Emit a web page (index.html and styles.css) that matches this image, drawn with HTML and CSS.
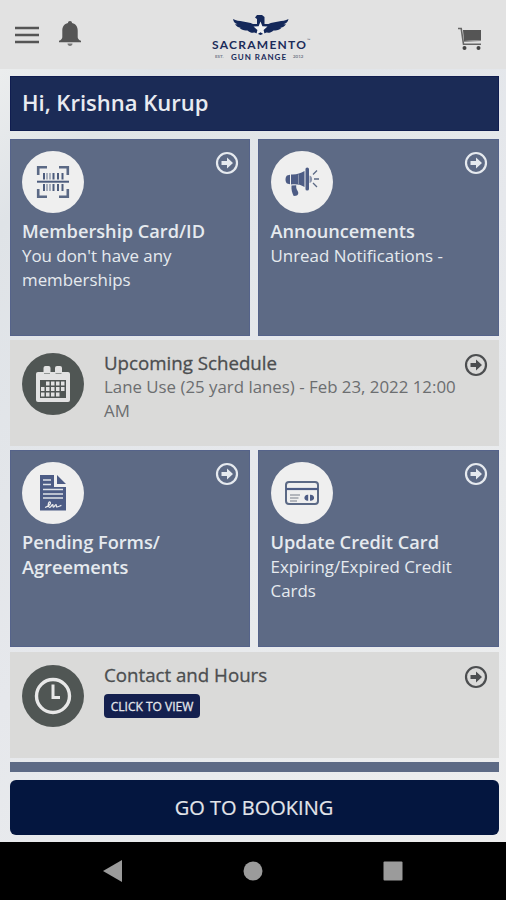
FILE: index.html
```
<!DOCTYPE html>
<html lang="en">
<head>
<meta charset="utf-8">
<title>Sacramento Gun Range</title>
<link rel="stylesheet" href="styles.css">
</head>
<body>
<svg class="defs" width="0" height="0">
	<symbol id="arrow" viewBox="0 0 24 24">
		<circle cx="12" cy="12" r="10" fill="none" stroke="currentColor" stroke-width="2.2"/>
		<path d="M6.5 10h5.5V6.5l6 5.5-6 5.5V14H6.5z" fill="currentColor"/>
	</symbol>
</svg>
<div class="app">
	<header class="topbar">
		<div class="topbar_left">
			<svg class="menu_icon" viewBox="0 0 24 18"><path d="M0 2h24M0 9h24M0 16h24" stroke="#555" stroke-width="2.4"/></svg>
			<svg class="bell_icon" viewBox="0 0 24 27"><path fill="#555" d="M12 1c1.300 0 2 .8 2 2.100 4 .9 5.700 3.900 5.700 7.400v6.700c0 1.600 1.200 2.700 3.300 3.600v1.400H1v-1.400c2.100-.9 3.300-2 3.300-3.600v-6.700C4.300 7 6 4 10 3.100 10 1.800 10.700 1 12 1z"/><path fill="#777" d="M9.500 23.500h5c0 1.500-1 2.500-2.500 2.500s-2.500-1-2.500-2.500z"/></svg>
		</div>
		<svg class="logo" viewBox="0 0 104 50">
			<path fill="#14285a" d="M23 4c6 3 14 2 20 5h4V4l-2-1.500L47 0h5l2.500 2v7h4c6-3 14-2 20-5-.5 3-2.500 4.500-5 5.200h2.500c-1.500 2.500-4 3.500-6.500 3.600h2c-2 2.400-5 3-8 2.600-2 2-4.500 2.600-7 2.200L50.500 20l-6-2.400c-2.500.4-5-.2-7-2.200-3 .4-6-.2-8-2.600h2c-2.500-.1-5-1.100-6.500-3.600h2.500C25 8.500 23.500 7 23 4z"/>
			<path fill="#f0f1f2" d="M50.500 6.500l1.900 4.700 5.100.4-3.900 3.300 1.200 5-4.300-2.700-4.300 2.700 1.200-5-3.900-3.300 5.100-.4z"/>
			<text class="logo_name" x="2" y="33.500" textLength="94">SACRAMENTO</text>
			<text class="logo_sub" x="21" y="44.500" textLength="55">GUN RANGE</text>
			<text class="logo_tiny" x="5" y="43">EST.</text>
			<text class="logo_tiny" x="83" y="43">2012</text>
			<text class="logo_tiny" x="97" y="27">™</text>
		</svg>
		<svg class="cart_icon" viewBox="0 0 24 24"><path fill="#555" d="M5 3h18v10L6 14z"/><path d="M0 1.500h3.200L5.500 17.200H23" fill="none" stroke="#666" stroke-width="1.600"/><path d="M6 14.500l17-1" stroke="#888" stroke-width="1.200"/><circle cx="6.500" cy="21" r="2" fill="#444"/><circle cx="20.500" cy="21" r="2" fill="#444"/></svg>
	</header>

	<main class="content">
		<div class="greeting">Hi, Krishna Kurup</div>

		<div class="tiles">
			<section class="tile">
				<div class="tile_head">
					<div class="round">
						<svg width="34" height="34" viewBox="0 0 34 34">
							<path d="M2.200 10V2.200H11M23 2.200h8.800V10M2.200 24v7.800H11M23 31.800h8.800V24" fill="none" stroke="#5b6985" stroke-width="2.600"/>
							<path d="M8 8v6.500M17.500 8v6.500M22 8v6.500M26.500 8v6.500M8 19v7M17.500 19v7M22 19v7M26.500 19v7" stroke="#4d5c7d" stroke-width="2"/>
							<path d="M11 8v6.500M14 8v6.500M11 19v7M14 19v7" stroke="#a0a8b8" stroke-width="1.800"/>
							<path d="M1 16.700h32" stroke="#4d5c7d" stroke-width="2"/>
						</svg>
					</div>
					<svg class="arrow"><use href="#arrow"/></svg>
				</div>
				<h2 class="tile_title">Membership Card/ID</h2>
				<p class="tile_text">You don't have any memberships</p>
			</section>
			<section class="tile">
				<div class="tile_head">
					<div class="round">
						<svg width="36" height="32" viewBox="0 0 36 32">
							<g fill="#4d5c85">
								<path d="M3 9.500l3-.8v9.600l-3-.8c-2-1.500-2-6.500 0-8z"/>
								<path d="M7 8.500c6 .3 9-1 13.500-3.500v16C16 18.500 13 18 7 18.500z"/>
								<path d="M7.500 19.500l4.700-.3c-.3 3 .8 4.500 1.800 6.500.8 1.800 0 3.500-2 4l-2.300.3c-1.500-3-2.600-6-2.200-10.500z"/>
								<path d="M21.500 3q0-1.500 1.700-1.500T25 3v20q0 1.500-1.800 1.500T21.500 23z"/>
							</g>
							<path d="M25.500 9.500c3.500.5 3.500 7 0 7.500z" fill="#8a94ab"/>
							<path d="M29 8.500l4-4M30 13h5M29 17l4 4" stroke="#5b6985" stroke-width="1.300"/>
							<path d="M14.500 8.500v9.500" stroke="#8a94ab" stroke-width="1"/>
						</svg>
					</div>
					<svg class="arrow"><use href="#arrow"/></svg>
				</div>
				<h2 class="tile_title">Announcements</h2>
				<p class="tile_text">Unread Notifications -</p>
			</section>
		</div>

		<section class="wide">
			<div class="round dark">
				<svg width="36" height="36" viewBox="0 0 36 36">
					<path fill="#e2e2e2" d="M3 6h30q2 0 2 2v26q0 2-2 2H3q-2 0-2-2V8q0-2 2-2z"/>
					<rect x="8.500" y="0" width="7" height="9" rx="2" fill="#e2e2e2"/>
					<rect x="20" y="0" width="7" height="9" rx="2" fill="#e2e2e2"/>
					<path d="M9 7.500h6M20.500 7.500h6" stroke="#929694" stroke-width="1"/>
					<path fill="#505654" d="M5 14h26v18H5z"/>
					<path fill="#e2e2e2" d="M11 15.500h3.500v4H11zM16 15.500h3.500v4H16zM21 15.500h3.500v4H21zM26 15.500h3.500v4H26zM6 21h3.500v4H6zM11 21h3.500v4H11zM16 21h3.500v4H16zM21 21h3.500v4H21zM26 21h3.500v4H26zM6 26.500h3.500v4H6zM11 26.500h3.500v4H11zM16 26.500h3.500v4H16zM21 26.500h3.500v4H21z"/>
				</svg>
			</div>
			<div class="wide_body">
				<h2 class="wide_title">Upcoming Schedule</h2>
				<p class="wide_text">Lane Use (25 yard lanes) - Feb 23, 2022 12:00 AM</p>
			</div>
			<svg class="arrow"><use href="#arrow"/></svg>
		</section>

		<div class="tiles">
			<section class="tile">
				<div class="tile_head">
					<div class="round">
						<svg width="28" height="36" viewBox="0 0 28 36">
							<path fill="#4d5c85" d="M1 0h14v12h12v23.500H1zM18 0l9 9h-9z"/>
							<path d="M4 5h8M4 9.500h8M4 14.500h20M4 19h20M4 23h20" stroke="#dfe2e8" stroke-width="1.600"/>
							<path d="M6 32.500c4-1 6.500-4.500 5-5.500-2-.8-2.500 5.300-.3 5.300 1.600 0 2-2.800 3-2.800.8 0-.3 2.600.8 2.600s1.400-2.600 2.400-2.600-.2 2.400 1 2.400 3-1 4.500-1.500" fill="none" stroke="#eee" stroke-width="1.200"/>
						</svg>
					</div>
					<svg class="arrow"><use href="#arrow"/></svg>
				</div>
				<h2 class="tile_title">Pending Forms/<br>Agreements</h2>
			</section>
			<section class="tile">
				<div class="tile_head">
					<div class="round">
						<svg width="36" height="26" viewBox="0 0 36 26">
							<rect x="2" y="2" width="32" height="22" rx="3" fill="none" stroke="#5b6985" stroke-width="2"/>
							<path d="M2 9h32" stroke="#4d5c85" stroke-width="2.200"/>
							<path d="M6 15h10M6 18h8.500M6 21h7" stroke="#a0a4ac" stroke-width="1.400"/>
							<path d="M24.200 14.800v6c-5 .5-5-6.500 0-6zM26 14.800v6c5.500.5 5.500-6.500 0-6z" fill="#4d5c85"/>
						</svg>
					</div>
					<svg class="arrow"><use href="#arrow"/></svg>
				</div>
				<h2 class="tile_title">Update Credit Card</h2>
				<p class="tile_text">Expiring/Expired Credit Cards</p>
			</section>
		</div>

		<section class="wide contact">
			<div class="round dark">
				<svg width="38" height="38" viewBox="0 0 38 38"><circle cx="19" cy="19" r="16.500" fill="none" stroke="#e8e8e8" stroke-width="3.400"/><path d="M19 7.500V20.500h7" fill="none" stroke="#e8e8e8" stroke-width="3"/></svg>
			</div>
			<div class="wide_body">
				<h2 class="wide_title">Contact and Hours</h2>
				<button class="view_btn">CLICK TO VIEW</button>
			</div>
			<svg class="arrow"><use href="#arrow"/></svg>
		</section>

		<div class="next_row"></div>
	</main>

	<button class="booking_btn">GO TO BOOKING</button>

	<nav class="sysnav">
		<svg width="20" height="22" viewBox="0 0 20 22"><path d="M0 11L19 0v22z" fill="#9b9b9b"/></svg>
		<svg width="20" height="20" viewBox="0 0 20 20"><circle cx="10" cy="10" r="9.500" fill="#9b9b9b"/></svg>
		<svg width="20" height="20" viewBox="0 0 20 20"><rect x=".5" y=".5" width="19" height="19" rx="1" fill="#9b9b9b"/></svg>
	</nav>
</div>
</body>
</html>
```
FILE: styles.css
```
*
{
	box-sizing : border-box;
}
body
{
	margin : 0;
	font-family : "Open Sans", "Noto Sans", sans-serif;
	background-color : #e6e7ea;
}
h2, p
{
	margin : 0;
	font-weight : 400;
}
button
{
	font-family : inherit;
	border : none;
	padding : 0;
}
.defs
{
	display : block;
}
.app
{
	display : flex;
	flex-direction : column;
	width : 506px;
	height : 900px;
	overflow : hidden;
	background : linear-gradient(135deg, #f1f2f1 0%, #dfe3e7 16%, #e6e8ec 50%, #e9ebed 70%, #efefef 100%);
}
/* top bar */
.topbar
{
	display : grid;
	grid-template-columns : 1fr 104px 1fr;
	flex : none;
	height : 69px;
	background-color : #e2e2e2;
}
.topbar_left
{
	display : flex;
	align-items : flex-start;
	padding-left : 15px;
	gap : 19px;
}
.menu_icon
{
	width : 24px;
	height : 18px;
	margin-top : 26px;
}
.bell_icon
{
	width : 24px;
	height : 27px;
	margin-top : 20px;
}
.logo
{
	width : 104px;
	height : 50px;
	margin : 15px 0 0 9px;
}
.logo_name
{
	font : 700 12px Lato, sans-serif;
	fill : #1b2c5a;
}
.logo_sub
{
	font : 700 8px Lato, sans-serif;
	fill : #1b2c5a;
}
.logo_tiny
{
	font : 700 4.5px Lato, sans-serif;
	fill : #777d8c;
}
.cart_icon
{
	justify-self : end;
	width : 24px;
	height : 24px;
	margin : 27px 24px 0 0;
}
/* dashboard */
.content
{
	display : flex;
	flex-direction : column;
	flex : none;
	padding : 7px 7.5px 0 9.5px;
}
.greeting
{
	height : 55px;
	padding-left : 11.5px;
	background-color : #1b2b56;
	border : 1px solid #101d50;
	color : #e9ebf1;
	font-size : 22px;
	font-weight : 600;
	line-height : 51px;
}
.tiles
{
	display : grid;
	grid-template-columns : 1fr 1fr;
	gap : 8px;
	height : 197px;
	margin-top : 8px;
}
.tile
{
	padding : 12px 11px 0 12.5px;
	background-color : #5d6a85;
	box-shadow : inset 0 0 0 1px #55638a;
	color : #e6eaef;
}
.tile_head
{
	display : flex;
	justify-content : space-between;
	align-items : flex-start;
	height : 68px;
}
.round
{
	display : flex;
	justify-content : center;
	align-items : center;
	flex : none;
	width : 62px;
	height : 62px;
	border-radius : 50%;
	background-color : #efefef;
}
.dark
{
	background-color : #505654;
}
.arrow
{
	flex : none;
	width : 24px;
	height : 24px;
}
.tile_title
{
	font-size : 18.2px;
	font-weight : 600;
	line-height : 25px;
}
.tile_text
{
	font-size : 16.9px;
	line-height : 23.5px;
}
.wide
{
	display : flex;
	align-items : flex-start;
	height : 106px;
	margin-top : 4px;
	padding : 13px 11px 0 12.5px;
	background-color : #dadad9;
	color : #4c4e50;
}
.wide + .tiles
{
	margin-top : 4px;
}
.contact
{
	margin-top : 5px;
}
.wide_body
{
	flex : 1;
	padding-left : 20px;
	white-space : nowrap;
}
.wide_title
{
	margin-top : -3px;
	font-size : 18.7px;
	font-weight : 500;
	line-height : 25px;
	-webkit-text-stroke : 0.3px #4c4e50;
}
.wide_text
{
	width : 356px;
	margin-right : -20px;
	color : #6c6e70;
	font-size : 16.85px;
	line-height : 23.5px;
	white-space : normal;
}
.view_btn
{
	display : block;
	width : 96px;
	height : 24px;
	margin-top : 7px;
	border-radius : 4px;
	background-color : #14204f;
	color : #e3e5ea;
	font-size : 12px;
	-webkit-text-stroke : 0.3px #e3e5ea;
}
.next_row
{
	height : 10px;
	margin-top : 4px;
	background-color : #5d6a85;
}
.booking_btn
{
	flex : none;
	height : 55px;
	margin : 8px 7.5px 0 9.5px;
	border-radius : 6px;
	background-color : #04163f;
	color : #e3e5ea;
	font-size : 20px;
	-webkit-text-stroke : 0.2px #e3e5ea;
}
/* android navigation */
.sysnav
{
	display : flex;
	justify-content : space-between;
	align-items : center;
	flex : none;
	height : 58px;
	margin-top : auto;
	padding : 0 103px;
	background-color : #000;
}
```
